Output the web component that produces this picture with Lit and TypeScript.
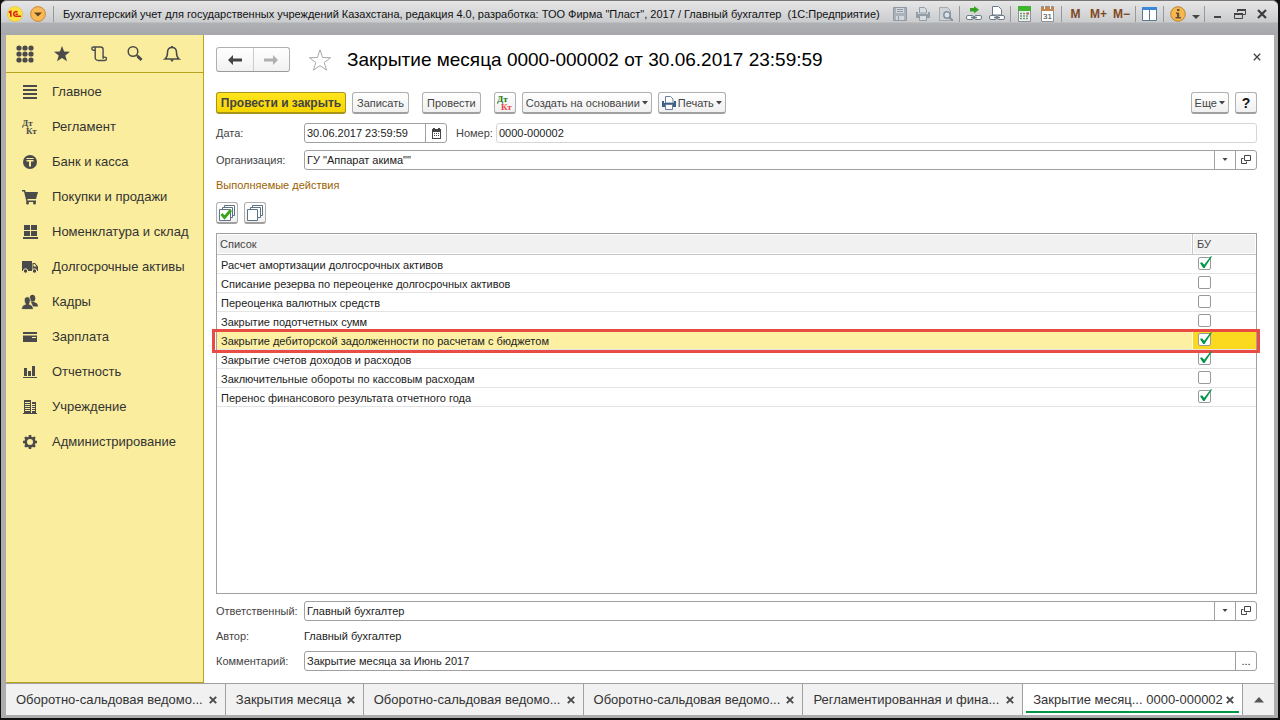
import { LitElement, html, css, svg, TemplateResult } from "lit";
import { customElement, state } from "lit/decorators.js";
import { classMap } from "lit/directives/class-map.js";

const icon = (w: number, h: number, body: unknown) =>
  html`<svg width=${w} height=${h} viewBox="0 0 ${w} ${h}" aria-hidden="true">${body}</svg>`;

const INK = "#4a4a4a";

const dtKt = (top: string, bottom: string) =>
  icon(16, 16, svg`
    <text x="0" y="7" font-family="Liberation Serif, serif" font-weight="700" font-size="9" fill=${top}>Дт</text>
    <text x="4" y="15" font-family="Liberation Serif, serif" font-weight="700" font-size="9" fill=${bottom}>Кт</text>`);

const icons: Record<string, TemplateResult> = {
  grid: icon(18, 18, svg`<g fill=${INK}>${[3, 9, 15].map((y) => [3, 9, 15].map((x) => svg`<circle cx=${x} cy=${y} r="2.6"/>`))}</g>`),
  star: icon(18, 18, svg`<path fill=${INK} d="M9 1l2.1 5.6 5.9.2-4.700 3.700 1.700 5.800L9 13l-5 3.300 1.700-5.800L1 6.800l5.900-.2z"/>`),
  scroll: icon(18, 18, svg`<path fill="none" stroke=${INK} stroke-width="1.400" d="M4.500 5.300H3.500a1.700 1.700 0 1 1 1.700-1.700V12.500a3 3 0 0 0 3 3h6.600a1.700 1.700 0 1 0-1.700-1.700V4.500a2.500 2.500 0 0 0-2.500-2.500H3.500"/>`),
  search: icon(18, 18, svg`<circle cx="7" cy="6.500" r="4.800" fill="none" stroke=${INK} stroke-width="1.500"/><path d="M10.500 10l1.500 1.500" stroke=${INK} stroke-width="1.500"/><path d="M11.500 11l4 4" stroke=${INK} stroke-width="3"/>`),
  bell: icon(18, 18, svg`<path fill="none" stroke=${INK} stroke-width="1.500" d="M2 14h14c-2-1.500-2.500-3-2.500-6.500 0-3-1.800-5-4.500-5s-4.500 2-4.500 5C4.500 11 4 12.500 2 14z"/><path d="M8 1h2v2H8zM7 14.500h4l-2 2.500z" fill=${INK}/>`),
  lines: icon(16, 16, svg`<path fill=${INK} d="M1 1h14v2H1zM1 5h14v2H1zM1 9h14v2H1zM1 13h14v2H1z"/>`),
  dtkt: dtKt(INK, INK),
  tenge: icon(16, 16, svg`<circle cx="8" cy="8" r="7" fill=${INK}/><path fill="#fbed9e" d="M4.500 4h7v1h-7zM4.500 6h7v1.500H9V12.500H7V7.500H4.500z"/>`),
  cart: icon(18, 16, svg`<path fill=${INK} d="M1 1h3l.7 2H17l-2 7H6.300l.4 1.500H15V13H5.500L3 2.500H1z"/><circle cx="6.500" cy="14" r="1.500" fill=${INK}/><circle cx="13.500" cy="14" r="1.500" fill=${INK}/>`),
  boxes: icon(16, 16, svg`<path fill=${INK} d="M2 1h6v5H2zM9 1h6v5H9zM2 7h6v5H2zM9 7h6v5H9zM1 13h15v2H1z"/>`),
  truck: icon(18, 16, svg`<path fill=${INK} d="M1 2h10v10H1zM11.500 4H14L17 7.500V12h-5.500z"/><path fill="#fbed9e" d="M12.500 5h1.200L15.500 7.500h-3z"/><circle cx="4.500" cy="12" r="2.200" fill=${INK} stroke="#fbed9e"/><circle cx="13.500" cy="12" r="2.200" fill=${INK} stroke="#fbed9e"/>`),
  people: icon(18, 16, svg`<g fill=${INK}><ellipse cx="11.500" cy="4.200" rx="2.800" ry="3.500"/><path d="M10 8h3c2.500.7 4 2 4 4.500h-5z"/></g><g fill=${INK} stroke="#fbed9e" stroke-width=".8"><path d="M.6 15.500c0-3.500 1.500-4.500 4-5.200C2.500 7 3 2.800 6.300 2.800S10 7 8.300 10.300c2.500.7 4 1.700 4 5.200z"/></g>`),
  card: icon(16, 16, svg`<path fill=${INK} d="M1 3h14v2H1zM1 6.500h14V13H1z"/><path fill="#fbed9e" d="M10 8h4v1h-4z"/>`),
  chart: icon(16, 16, svg`<path fill=${INK} d="M2 4h3v8H2zM6 7h3v5H6zM10 2h3v10h-3zM1 13h14v1H1z"/>`),
  building: icon(16, 16, svg`<path fill=${INK} d="M2 1h7v13H2zM10 3h4v11h-4zM1 14h14v1H1z"/><path stroke="#fbed9e" d="M3 3.500h5M3 5.500h5M3 7.500h5M3 9.500h5M3 11.500h5M10 5.500h3M10 7.500h3M10 9.500h3M10 11.500h3"/>`),
  gear: icon(16, 16, svg`<circle cx="8" cy="8" r="4.300" fill="none" stroke=${INK} stroke-width="2.600"/>${[0, 45, 90, 135].map((a) => svg`<path d="M8 1v2.500M8 12.500V15" stroke=${INK} stroke-width="2.600" transform="rotate(${a} 8 8)"/>`)}`),
  back: icon(16, 12, svg`<path fill="#444" d="M1 6l5-5v3.500h9v3H6V11z"/>`),
  forward: icon(16, 12, svg`<path fill="#b0b0b0" d="M15 6l-5-5v3.500H1v3h9V11z"/>`),
  favourite: icon(24, 24, svg`<path fill="none" stroke="#a8a8a8" d="M12 2l2.600 7.500 8 .2-6.400 4.800 2.400 7.700-6.600-4.600-6.600 4.600 2.400-7.700L1.400 9.700l8-.2z"/>`),
  cross: icon(8, 8, svg`<path stroke="#444" stroke-width="1.300" d="M.8.8l6.400 6.400M7.200.8L.8 7.200"/>`),
  tabCross: icon(8, 8, svg`<path stroke="#4a4a4a" stroke-width="1.900" d="M.8.8l6.400 6.400M7.200.8L.8 7.200"/>`),
  caret: icon(6, 4, svg`<path fill="#444" d="M0 0h6L3 3.500z"/>`),
  fieldCaret: icon(6, 4, svg`<path fill="#444" d="M.5 0h5L3 3z"/>`),
  up: icon(10, 6, svg`<path fill="#555" d="M0 5.500h10L5 0z"/>`),
  calendar: icon(11, 11, svg`<path fill="#444" d="M1 1h1V0h2v1h3V0h2v1h1v10H1z"/><path fill="#fff" d="M2 4h7v6H2z"/><path fill="#444" d="M3 5h1v1H3zM5 5h1v1H5zM7 5h1v1H7zM3 7h1v1H3zM5 7h1v1H5zM7 7h1v1H7z"/>`),
  open: icon(10, 10, svg`<path fill="none" stroke="#444" d="M3.500.5h6v5h-6zM2.500 3.500h-2v5h5v-2"/>`),
  dtktColor: dtKt("#16780a", "#f04040"),
  printer: icon(14, 16, svg`<path d="M3.500 1.500h5l2.500 2.500v4H3.500z" fill="#fff" stroke="#6b8096"/><path d="M0 6h2v2h10V6h2v6H0z" fill="#3a6187"/><path d="M3.500 9.500h7v5h-7z" fill="#fff" stroke="#6b8096"/>`),
  checkAll: icon(16, 16, svg`<g fill="#fff" stroke="#5c7285"><path d="M5.500.5h10v10h-10z"/><path d="M3.500 2.500h10v10h-10z"/><path d="M.5 4.500h11v11H.5z"/></g><path fill="none" stroke="#37a51f" stroke-width="2.800" d="M2.500 9l3 3.500L12 5"/>`),
  uncheckAll: icon(16, 16, svg`<g fill="#fff" stroke="#5c7285"><path d="M5.500.5h10v10h-10z"/><path d="M3.500 2.500h10v10h-10z"/><path d="M.5 4.500h10v11H.5z"/></g>`),
  logo: icon(16, 16, svg`<circle cx="8" cy="8" r="7.500" fill="#ffe23d" stroke="#e5bd28" stroke-width=".6"/><path fill="none" stroke="#d9231c" stroke-width="1.600" d="M1.800 6.500L3.800 5.300v5.400M10.500 6.200a2.300 2.300 0 1 0-1.800 4H14M11 8.300H8.500"/>`),
  menuDown: icon(16, 16, svg`<circle cx="8" cy="8" r="7.400" fill="#fbb956" stroke="#c58a3c"/><path fill="#5c4420" d="M4 6.500h8L8 10.500z"/>`),
  save: icon(14, 14, svg`<path fill="#a9b1b9" stroke="#8e99a4" d="M.5.5h13v13H.5z"/><path fill="#d2d7db" d="M3 1h8v5H3zM3 9h8v4H3z"/><path stroke="#8e99a4" d="M4 2.500h6M4 4.500h6M5.500 9v4"/>`),
  print: icon(14, 14, svg`<path d="M3.500.5h5l2 2V6h-7z" fill="#d8dcdf" stroke="#929da7"/><path d="M0 5h2v2h10V5h2v6H0z" fill="#929da7"/><path d="M3.500 8.500h7v5h-7z" fill="#d8dcdf" stroke="#929da7"/>`),
  preview: icon(14, 14, svg`<path d="M.5.5h8l3 3v10H.5z" fill="#d0d4d7" stroke="#a0aab3"/><circle cx="8" cy="8" r="3.200" fill="#dde2e6" stroke="#8290a0" stroke-width="1.500"/><path d="M10.500 10.500L14 14" stroke="#8290a0" stroke-width="2"/>`),
  linkGo: icon(16, 16, svg`<path fill="#35a321" d="M4 2h4V0l5 3.700-5 3.800V5.500H4z"/><g fill="#fff" stroke="#6d7b88"><rect x=".5" y="9.500" width="7" height="4" rx="1.500"/><rect x="8.500" y="9.500" width="7" height="4" rx="1.500"/></g><path stroke="#6d7b88" stroke-width="1.500" d="M5 11.500h6"/>`),
  linkPage: icon(16, 16, svg`<path d="M3.500.5h6l3 3V9h-9z" fill="#fff" stroke="#6d7b88"/><g fill="#fff" stroke="#6d7b88"><rect x=".5" y="9.500" width="7" height="4" rx="1.500"/><rect x="8.500" y="9.500" width="7" height="4" rx="1.500"/></g><path stroke="#6d7b88" stroke-width="1.500" d="M5 11.500h6"/>`),
  calc: icon(13, 16, svg`<path fill="#eef0f0" stroke="#8a9298" d="M.5.5h12v15H.5z"/><path fill="#3fb52f" d="M0 0h13v5H0z"/><path stroke="#6d9a72" stroke-width="1.500" stroke-dasharray="2 1" d="M2 7.500h9M2 10h9M2 12.500h9"/><path fill="#d55" d="M9 6.500h2v2H9z"/>`),
  date: icon(13, 16, svg`<path fill="#fff" stroke="#8e9296" d="M.5.500h12v15H.5z"/><path fill="#c08850" d="M0 1h13v4H0z"/><path fill="#fff" d="M3 0h1v3H3zM9 0h1v3H9z"/><text x="6.500" y="13" text-anchor="middle" font-family="Liberation Sans, sans-serif" font-size="8" fill="#333">31</text>`),
  panels: icon(15, 14, svg`<path fill="#fff" stroke="#5b7895" d="M.5.500h14v13H.5z"/><path fill="#3b88d8" d="M0 0h15v3H0z"/><path stroke="#5b7895" d="M7.500 3v11"/>`),
  info: icon(16, 16, svg`<circle cx="8" cy="8" r="7.300" fill="#f8b64c" stroke="#b9842f"/><path fill="#5f5540" d="M7 3h2.500v2H7zM6 6.500h3.200V11H11v1.500H5.500V11H7V8H6z"/>`),
  smallDown: icon(8, 4, svg`<path fill="#444" d="M0 0h8L4 4z"/>`),
  minimise: icon(12, 12, svg`<path fill="#444" d="M2 8h7v2H2z"/>`),
  restore: icon(12, 12, svg`<path fill="none" stroke="#444" d="M3.500 4V1.500h8v5H9M.5 5.500h8v5h-8z"/><path stroke="#444" stroke-width="2" d="M3 2h9M0 6h9"/>`),
  close: icon(10, 10, svg`<path stroke="#3c3c3c" stroke-width="2.200" d="M1 1l8 8M9 1L1 9"/>`),
};

interface Job { name: string; done: boolean; selected?: boolean }

@customElement("app-root")
export class AppRoot extends LitElement {
  static styles = css`
    :host { display: flex; flex-direction: column; min-height: 100vh; box-sizing: border-box; padding: 0 2px 2px 1px;
      background: #111; font-family: "Liberation Sans", Arial, sans-serif; font-size: 11px; color: #222; }
    * { box-sizing: border-box; }
    svg { display: block; flex: none; }
    button { font: inherit; color: inherit; padding: 0; margin: 0; border: 0; background: none;
      display: flex; align-items: center; justify-content: center; }
    input { font: inherit; color: inherit; margin: 0; }
    a { color: inherit; text-decoration: none; }

    .window { flex: 1; display: flex; flex-direction: column; padding: 0 4px 3px 5px; background: #adadb0;
      border-radius: 6px 6px 0 0; }
    .titlebar { height: 35px; margin: 0 -4px 0 -5px; padding: 1px 5px 9px 6px; display: flex; align-items: center;
      border-top: 1px solid #777; border-radius: 6px 6px 0 0;
      background: linear-gradient(#e6e6e7, #cbccce 21px, #b0b1b4 22px, #a6a7aa); }
    .brand { display: flex; align-items: center; gap: 7px; }
    .divider { width: 1px; height: 16px; background: #999; }
    .caption { flex: 1; padding-left: 9px; white-space: pre; color: #111; }
    .tools { display: flex; align-items: center; }
    .tools button { width: 23px; height: 20px; }
    .tools .divider { margin: 0 2px; }
    .tools .narrow { width: 13px; padding-top: 6px; }
    .tools .system { width: 22px; }
    .memory { font-weight: 700; font-size: 12px; color: #80481f; }

    .body { flex: 1; display: flex; background: #fff; }
    .side { width: 198px; flex: none; background: #fbed9e; border-right: 1px solid #b8a31c; border-bottom: 1px solid #b8a31c; }
    .quick { height: 38px; padding: 0 22px 0 10px; display: flex; justify-content: space-between; align-items: center;
      border-bottom: 1px solid #b8a31c; }
    .quick button { width: 18px; height: 18px; }
    .sections { list-style: none; margin: 0; padding: 1px 0 0; }
    .sections a { height: 35px; display: flex; align-items: center; padding-left: 15px; font-size: 13px; color: #333; }
    .glyph { width: 18px; margin-right: 13px; display: flex; justify-content: center; }

    .main { flex: 1; min-width: 0; display: flex; flex-direction: column; padding: 12px 17px 12px 12px; }
    .heading { height: 25px; display: flex; align-items: center; }
    .history { width: 74px; height: 25px; display: flex; border: 1px solid #b0b0b0; border-bottom-color: #999;
      border-radius: 3px; background: linear-gradient(#fff, #f1f1f1); }
    .history button { flex: 1; }
    .history button + button { border-left: 1px solid #ccc; }
    .fav { margin: 0 15px 0 18px; width: 24px; }
    h1 { flex: 1; margin: 0; font-size: 19px; font-weight: 400; color: #000; }
    .shut { width: 8px; height: 8px; align-self: flex-start; margin-right: -4px; margin-top: 6px; }

    .commands { display: flex; margin-top: 20px; gap: 6px; }
    .btn { height: 22px; padding: 0 4px; gap: 2px; border: 1px solid #b0b0b0; border-bottom: 2px solid #a0a0a0;
      border-radius: 3px; background: linear-gradient(#fff, #f0f0f0); color: #444; white-space: nowrap; }
    .menu { padding: 0 3px; }
    .primary { width: 130px; font-weight: 700; font-size: 12px; background: linear-gradient(#ffe51f, #f7d600);
      border-color: #a8941a; }
    .square { width: 22px; padding: 0; }
    .apart { margin-left: 7px; }
    .push { margin-left: auto; }
    .help { font-weight: 700; font-size: 14px; color: #111; }

    .row { display: flex; align-items: center; }
    .row > label, .row > .name { width: 88px; flex: none; color: #444; }
    .row > .inner { width: auto; margin: 0 3px 0 9px; }
    .field { flex: 1; min-width: 0; height: 20px; display: flex; border: 1px solid #a0a0a0; border-radius: 3px; background: #fff; }
    .field input { flex: 1; min-width: 0; border: 0; padding: 0 2px; background: none; outline: none; }
    .field button { width: 21px; border-left: 1px solid #a0a0a0; }
    .date { flex: 0 0 143px; }
    .readonly { border-color: #d6d6d6; }
    .first { margin-top: 9px; }
    .second { margin-top: 7px; }
    .group { margin: 9px 0 0; font-size: 11px; line-height: 13px; font-weight: 400; color: #9c6200; }
    .marks { display: flex; gap: 6px; margin-top: 10px; }

    .list { flex: 1; margin-top: 9px; border: 1px solid #a0a0a0; }
    table { width: 100%; border-spacing: 0; table-layout: fixed; }
    th { height: 21px; padding: 0 3px; text-align: left; font-weight: 400; color: #444; background: #f1f1f1;
      border-bottom: 1px solid #c6c6c6; box-shadow: inset 0 0 0 1px #fff; }
    th + th { width: 64px; padding: 0 4px; border-left: 1px solid #c6c6c6; }
    td { height: 19px; padding: 2px 4px 0; border-bottom: 1px solid #e4e4e4; }
    td + td { padding: 0 5px 2px; border-left: 1px solid #fff; }
    .picked { position: relative; }
    .picked td { background: #fdf0a2; background-clip: padding-box; }
    .picked td + td { background-color: #fbd91e; }
    .frame { position: absolute; inset: -2px -4px -3px -5px; border: 3px solid #e94b45; pointer-events: none; }
    .tick { display: grid; width: 13px; height: 13px; }
    .tick > * { grid-area: 1 / 1; }
    .tick input { appearance: none; width: 13px; height: 13px; border: 1px solid #999; border-radius: 2px; background: #fff; }
    .tick svg { overflow: visible; pointer-events: none; z-index: 1; }

    .below { display: flex; flex-direction: column; gap: 5px; margin-top: 7px; }
    .below .row { min-height: 20px; }

    .tabs { display: flex; height: 32px; border-top: 1px solid #a0a0a0; background: #f1f1f1; }
    .tab { flex: 220 220 220px; min-width: 0; display: flex; align-items: center; padding: 0 8px 0 10px;
      border-right: 1px solid #a0a0a0; font-size: 13px; color: #333; }
    .short { flex: 138 138 138px; }
    .tab a { flex: 1; white-space: nowrap; }
    .tab button { width: 8px; height: 8px; }
    .current { padding: 0 3px; background: #fff; }
    .inside { flex: 1; min-width: 0; align-self: stretch; display: flex; align-items: center;
      margin-bottom: 2px; padding: 4px 5px 0 7px; border-bottom: 2px solid #009646; }
    .all { width: 31px; }
  `;

  @state() private jobs: Job[] = [
    { name: "Расчет амортизации долгосрочных активов", done: true },
    { name: "Списание резерва по переоценке долгосрочных активов", done: false },
    { name: "Переоценка валютных средств", done: false },
    { name: "Закрытие подотчетных сумм", done: false },
    { name: "Закрытие дебиторской задолженности по расчетам с бюджетом", done: true, selected: true },
    { name: "Закрытие счетов доходов и расходов", done: true },
    { name: "Заключительные обороты по кассовым расходам", done: false },
    { name: "Перенос финансового результата отчетного года", done: true },
  ];

  private sections: [string, string][] = [
    ["lines", "Главное"], ["dtkt", "Регламент"], ["tenge", "Банк и касса"], ["cart", "Покупки и продажи"],
    ["boxes", "Номенклатура и склад"], ["truck", "Долгосрочные активы"], ["people", "Кадры"], ["card", "Зарплата"],
    ["chart", "Отчетность"], ["building", "Учреждение"], ["gear", "Администрирование"],
  ];

  private tabs = ["Оборотно-сальдовая ведомо...", "Закрытия месяца", "Оборотно-сальдовая ведомо...",
    "Оборотно-сальдовая ведомо...", "Регламентированная и фина..."];

  private toggle(index: number) {
    this.jobs = this.jobs.map((job, i) => (i === index ? { ...job, done: !job.done } : job));
  }

  private tool(name: string, label: string, kind = "") {
    return html`<button class=${kind} aria-label=${label}>${icons[name]}</button>`;
  }

  private renderTitlebar() {
    const divider = html`<span class="divider"></span>`;
    return html`<header class="titlebar">
      <div class="brand">${icons.logo}<button aria-label="Главное меню">${icons.menuDown}</button>${divider}</div>
      <div class="caption">Бухгалтерский учет для государственных учреждений Казахстана, редакция 4.0, разработка: ТОО Фирма "Пласт", 2017 / Главный бухгалтер  (1С:Предприятие)</div>
      <div class="tools">
        ${this.tool("save", "Сохранить")}${this.tool("print", "Печать")}${this.tool("preview", "Просмотр")}${divider}
        ${this.tool("linkGo", "Перейти по ссылке")}${this.tool("linkPage", "Получить ссылку")}${divider}
        ${this.tool("calc", "Калькулятор")}${this.tool("date", "Календарь")}${divider}
        <button class="memory">M</button><button class="memory">M+</button><button class="memory">M−</button>${divider}
        ${this.tool("panels", "Панели")}${divider}
        ${this.tool("info", "Справка")}${this.tool("smallDown", "Ещё", "narrow")}${divider}
        ${this.tool("minimise", "Свернуть", "system")}${this.tool("restore", "Восстановить", "system")}${this.tool("close", "Закрыть", "system")}
      </div>
    </header>`;
  }

  private renderSide() {
    return html`<nav class="side">
      <div class="quick">
        ${this.tool("grid", "Меню")}${this.tool("star", "Избранное")}${this.tool("scroll", "История")}
        ${this.tool("search", "Поиск")}${this.tool("bell", "Оповещения")}
      </div>
      <ul class="sections">
        ${this.sections.map(([name, label]) => html`<li><a href="#"><span class="glyph">${icons[name]}</span>${label}</a></li>`)}
      </ul>
    </nav>`;
  }

  private renderList() {
    return html`<div class="list"><table>
      <thead><tr><th>Список</th><th>БУ</th></tr></thead>
      <tbody>${this.jobs.map((job, i) => html`<tr class=${classMap({ picked: !!job.selected })}>
        <td>${job.name}</td>
        <td><label class="tick">
          <input type="checkbox" aria-label=${job.name} .checked=${job.done} @change=${() => this.toggle(i)}>
          ${job.done ? icon(13, 13, svg`<path fill="#009646" d="M2 6l2-.8 2.200 2.600L12.800-.8l1.200.3L6.500 11H5.200z"/>`) : ""}
        </label>${job.selected ? html`<div class="frame"></div>` : ""}</td>
      </tr>`)}</tbody>
    </table></div>`;
  }

  render() {
    return html`<div class="window">
      ${this.renderTitlebar()}
      <div class="body">
        ${this.renderSide()}
        <main class="main">
          <div class="heading">
            <div class="history">${this.tool("back", "Назад")}${this.tool("forward", "Вперед")}</div>
            <button class="fav" aria-label="В избранное">${icons.favourite}</button>
            <h1>Закрытие месяца 0000-000002 от 30.06.2017 23:59:59</h1>
            <button class="shut" aria-label="Закрыть">${icons.cross}</button>
          </div>
          <div class="commands">
            <button class="btn primary">Провести и закрыть</button>
            <button class="btn">Записать</button>
            <button class="btn apart">Провести</button>
            <button class="btn square apart" aria-label="Проводки">${icons.dtktColor}</button>
            <button class="btn menu">Создать на основании${icons.caret}</button>
            <button class="btn menu">${icons.printer}Печать${icons.caret}</button>
            <button class="btn menu push">Еще${icons.caret}</button>
            <button class="btn square help">?</button>
          </div>
          <div class="row first">
            <label for="date">Дата:</label>
            <div class="field date"><input id="date" value="30.06.2017 23:59:59"><button aria-label="Выбрать дату">${icons.calendar}</button></div>
            <label class="inner" for="number">Номер:</label>
            <div class="field readonly"><input id="number" readonly value="0000-000002"></div>
          </div>
          <div class="row second">
            <label for="org">Организация:</label>
            <div class="field"><input id="org" value='ГУ "Аппарат акима""'>
              <button aria-label="Выбрать">${icons.fieldCaret}</button><button aria-label="Открыть">${icons.open}</button></div>
          </div>
          <h2 class="group">Выполняемые действия</h2>
          <div class="marks">
            <button class="btn square" aria-label="Отметить все">${icons.checkAll}</button>
            <button class="btn square" aria-label="Снять все">${icons.uncheckAll}</button>
          </div>
          ${this.renderList()}
          <div class="below">
            <div class="row">
              <label for="owner">Ответственный:</label>
              <div class="field"><input id="owner" value="Главный бухгалтер">
                <button aria-label="Выбрать">${icons.fieldCaret}</button><button aria-label="Открыть">${icons.open}</button></div>
            </div>
            <div class="row"><span class="name">Автор:</span><span>Главный бухгалтер</span></div>
            <div class="row">
              <label for="note">Комментарий:</label>
              <div class="field"><input id="note" value="Закрытие месяца за Июнь 2017"><button aria-label="Изменить">...</button></div>
            </div>
          </div>
        </main>
      </div>
      <footer class="tabs">
        ${this.tabs.map((name, i) => html`<div class=${classMap({ tab: true, short: i === 1 })}>
          <a href="#">${name}</a><button aria-label="Закрыть вкладку">${icons.tabCross}</button></div>`)}
        <div class="tab current"><div class="inside"><a href="#">Закрытие месяц... 0000-000002</a><button aria-label="Закрыть вкладку">${icons.tabCross}</button></div></div>
        <button class="all" aria-label="Все окна">${icons.up}</button>
      </footer>
    </div>`;
  }
}
